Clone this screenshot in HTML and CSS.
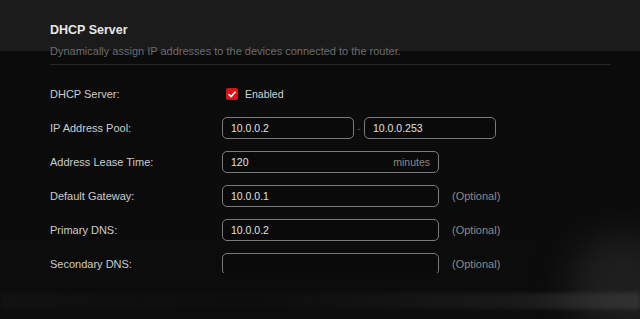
FILE: index.html
```html
<!DOCTYPE html>
<html>
<head>
    <title>DHCP Server</title>
    <link rel="stylesheet" href="styles.css">
</head>
<body>
    <div class="backdrop">
        <div class="glow-band"></div>
        <div class="glow-blob"></div>
    </div>
    <div class="panel">
        <h1 class="title">DHCP Server</h1>
        <p class="desc">Dynamically assign IP addresses to the devices connected to the router.</p>
        <div class="form">
            <div class="row">
                <label class="label">DHCP Server:</label>
                <label class="check">
                    <span class="box">
                        <svg width="8" height="7" viewBox="0 0 8 7"><path d="M1 3.6 L3.1 5.6 L7 1.2" fill="none" stroke="#fff" stroke-width="1.6" stroke-linecap="round" stroke-linejoin="round"/></svg>
                    </span>
                    Enabled
                </label>
            </div>
            <div class="row">
                <label class="label">IP Address Pool:</label>
                <div class="field short"><span class="value">10.0.0.2</span></div>
                <span class="dash">-</span>
                <div class="field short"><span class="value">10.0.0.253</span></div>
            </div>
            <div class="row">
                <label class="label">Address Lease Time:</label>
                <div class="field"><span class="value">120</span><span class="unit">minutes</span></div>
            </div>
            <div class="row">
                <label class="label">Default Gateway:</label>
                <div class="field"><span class="value">10.0.0.1</span></div>
                <span class="hint">(Optional)</span>
            </div>
            <div class="row">
                <label class="label">Primary DNS:</label>
                <div class="field"><span class="value">10.0.0.2</span></div>
                <span class="hint">(Optional)</span>
            </div>
            <div class="row">
                <label class="label">Secondary DNS:</label>
                <div class="field"><span class="value"></span></div>
                <span class="hint">(Optional)</span>
            </div>
        </div>
    </div>
</body>
</html>
```

FILE: styles.css
```css
body {
    margin: 0;
    background: #0b0b0c;
    font-family: "Liberation Sans", Arial, sans-serif;
    color: #d2d2d2;
    height: 319px;
    overflow: hidden;
}
.backdrop {
    position: absolute;
    top: 0;
    left: 0;
    width: 640px;
    height: 319px;
    background: linear-gradient(to bottom, #1b1b1b 0, #1b1b1b 51px, #0b0b0c 51px, #0c0c0d 100%);
    overflow: hidden;
}
.glow-band {
    position: absolute;
    left: 0;
    top: 293px;
    width: 640px;
    height: 16px;
    background: linear-gradient(to right, rgba(36,36,36,0.25), rgba(26,26,26,0.1) 40%, rgba(46,46,46,0.4) 80%, rgba(66,66,66,0.6));
    filter: blur(2px);
}
.glow-blob {
    position: absolute;
    right: -40px;
    top: 235px;
    width: 110px;
    height: 100px;
    border-radius: 50%;
    background: rgba(60,60,60,0.4);
    filter: blur(18px);
}
.panel {
    position: relative;
    padding: 23px 29px 0 50px;
}
.title {
    margin: 0;
    font-size: 12.5px;
    line-height: 15px;
    font-weight: bold;
    color: #e6e6e6;
}
.desc {
    margin: 7px 0 0;
    padding-bottom: 6px;
    font-size: 11px;
    line-height: 13px;
    color: #6c6c6c;
    border-bottom: 1px solid #262626;
}
.form {
    display: flex;
    flex-direction: column;
    gap: 12px;
    padding-top: 18px;
    height: 190px;
    overflow: hidden;
}
.row {
    display: flex;
    align-items: center;
    height: 22px;
    flex-shrink: 0;
}
.label {
    width: 172px;
    font-size: 11px;
    color: #cccccc;
}
.check {
    display: flex;
    align-items: center;
    gap: 7px;
    margin-left: 4px;
    font-size: 10.5px;
    color: #d4d4d4;
}
.box {
    width: 12px;
    height: 12px;
    border-radius: 2px;
    background: #dc1018;
    display: flex;
    align-items: center;
    justify-content: center;
}
.field {
    box-sizing: border-box;
    width: 217px;
    height: 22px;
    border: 1px solid #7a7a7a;
    border-radius: 5px;
    padding: 0 8px;
    display: flex;
    align-items: center;
    justify-content: space-between;
    font-size: 10.5px;
    background: #0a0a0a;
}
.field.short {
    width: 132px;
}
.value {
    color: #e0e0e0;
}
.unit {
    color: #888888;
}
.dash {
    width: 10px;
    text-align: center;
    font-size: 10px;
    color: #555;
}
.hint {
    margin-left: 13px;
    font-size: 11px;
    color: #8a8a8a;
}
```
